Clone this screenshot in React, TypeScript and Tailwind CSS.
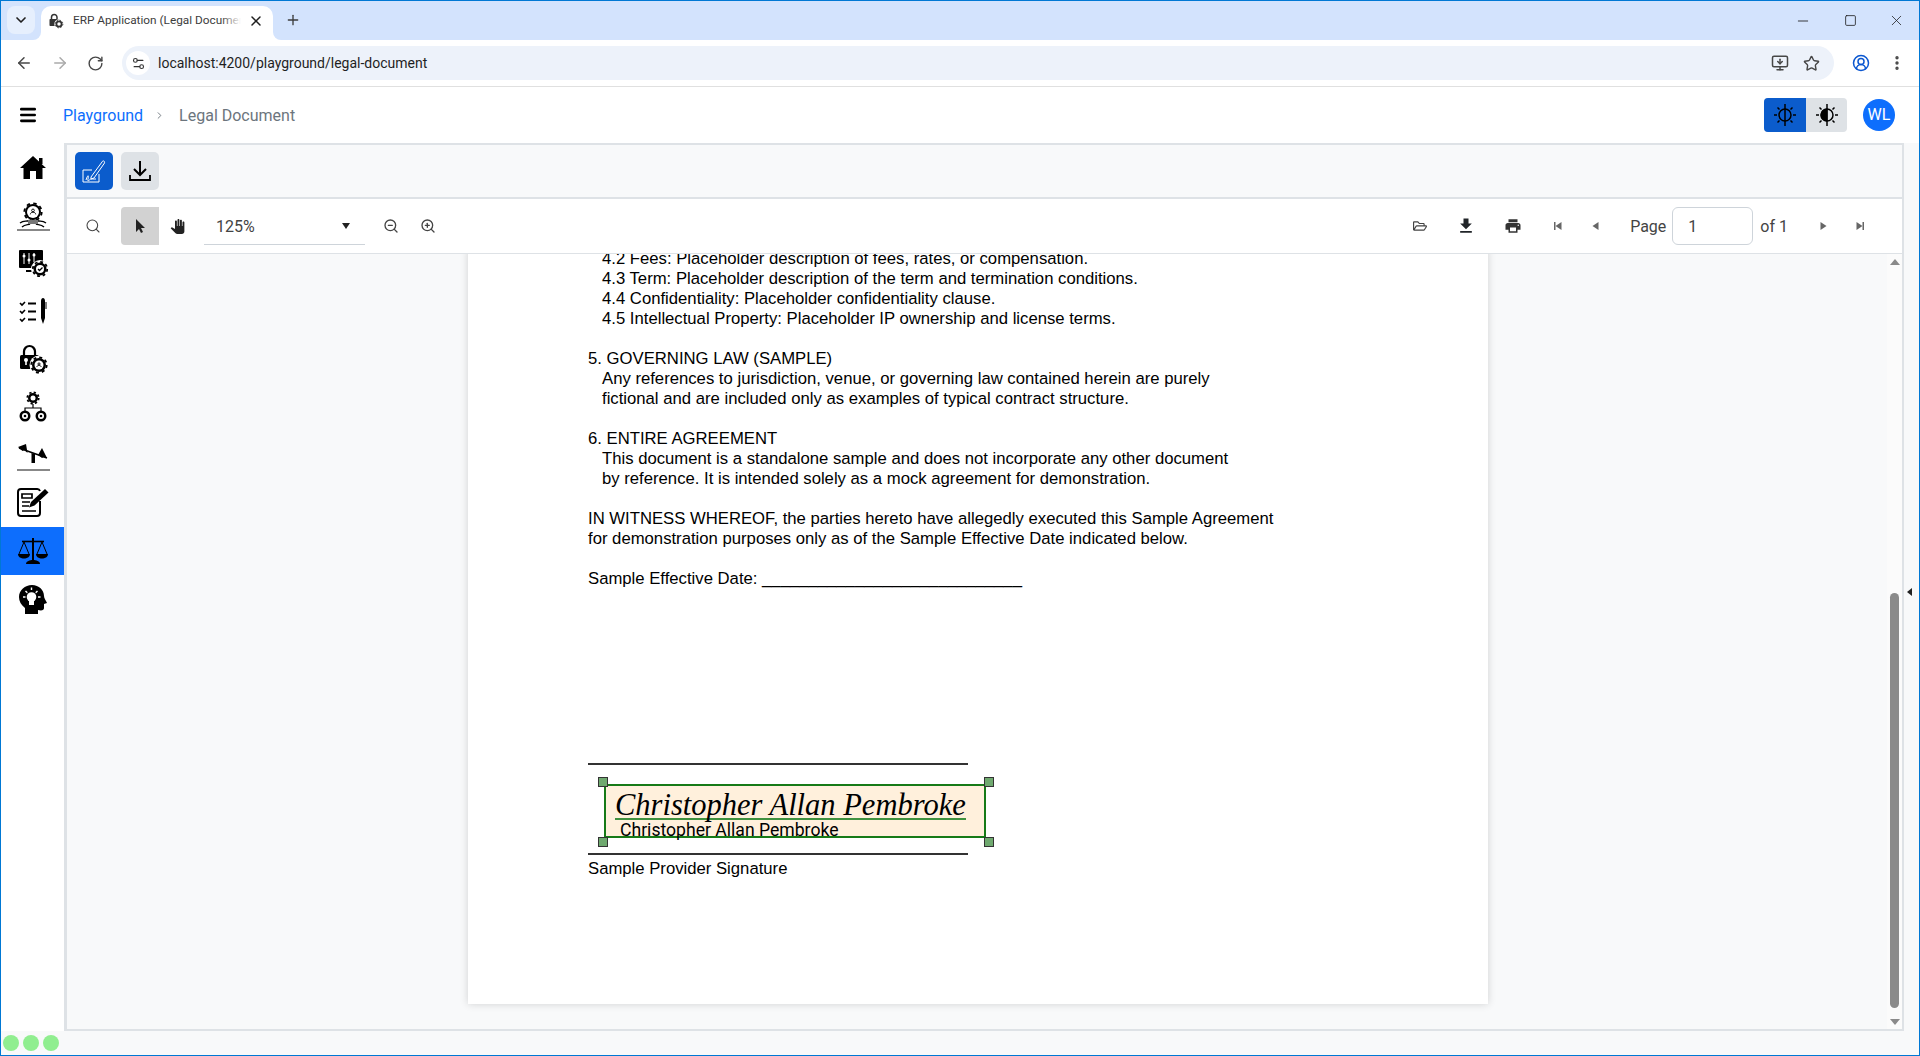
import {
  ArrowLeft,
  ArrowRight,
  ChevronDown,
  ChevronRight,
  CircleUserRound,
  EllipsisVertical,
  Menu,
  Minus,
  MonitorDown,
  Plus,
  RotateCw,
  Search,
  Settings2,
  Square,
  Star,
  X,
  ZoomIn,
  ZoomOut,
} from 'lucide-react'
import { FaRegFolderOpen } from 'react-icons/fa'
import { MdFileDownload, MdLocalPrintshop, MdPanTool } from 'react-icons/md'

function Gear({ cx, cy, r }: { cx: number; cy: number; r: number }) {
  const outer = r + 0.7
  const tooth = (2 * Math.PI * outer) / 16
  return (
    <g>
      <circle cx={cx} cy={cy} r={r} fill="currentColor" />
      <circle cx={cx} cy={cy} r={outer} fill="none" stroke="currentColor" strokeWidth={1.8} strokeDasharray={`${tooth} ${tooth}`} />
    </g>
  )
}

function Person({ cx, cy, s }: { cx: number; cy: number; s: number }) {
  return (
    <g fill="none" stroke="currentColor" strokeWidth={0.9}>
      <circle cx={cx} cy={cy - s * 0.3} r={s * 0.38} />
      <path d={`M${cx - s * 0.75} ${cy + s * 0.8}c0-${s * 0.8} ${s * 1.5}-${s * 0.8} ${s * 1.5} 0`} />
    </g>
  )
}

function Icon({ children }: { children: React.ReactNode }) {
  return (
    <svg viewBox="0 0 32 32" className="w-8 h-8 text-black">
      {children}
    </svg>
  )
}

const HomeIcon = () => (
  <Icon>
    <path fill="currentColor" d="M16 5 29 17h-3.500v11H19v-8h-6v8H6.500V17H3Z" />
    <rect x="22" y="7" width="3.500" height="6" fill="currentColor" />
  </Icon>
)

const EngineerIcon = () => (
  <Icon>
    <Gear cx={16} cy={13} r={8} />
    <circle cx={16} cy={13} r={6} fill="#fff" />
    <Person cx={16} cy={12.500} s={3.600} />
    <path d="M3 24c4-3 6-1 9-2.500M29 24c-4-3-6-1-9-2.500M5 28c3-3 6-2 8-3M27 28c-3-3-6-2-8-3" fill="none" stroke="currentColor" strokeWidth={1.400} />
    <path d="M11 21h10v4H11Z" fill="#777" />
  </Icon>
)

const MonitorIcon = () => (
  <Icon>
    <rect x="2" y="3" width="24" height="18" rx="1" fill="currentColor" />
    <path d="M7 6v11M12 6v11M17 6v9" stroke="#fff" strokeWidth={1} />
    <circle cx="7" cy="9" r="1.500" fill="#fff" />
    <circle cx="12" cy="13" r="1.500" fill="#fff" />
    <circle cx="17" cy="8" r="1.500" fill="#fff" />
    <path d="M9 24h7" stroke="currentColor" strokeWidth={2} />
    <circle cx="23" cy="22" r="9" fill="#fff" />
    <Gear cx={23} cy={22} r={6.500} />
    <circle cx="23" cy="22" r="4" fill="#fff" />
    <path d="m21 22 1.500 1.500L25.500 20.500" fill="none" stroke="currentColor" strokeWidth={1.300} />
  </Icon>
)

const ChecklistIcon = () => (
  <Icon>
    <path d="m3 8 2 2 3-3M3 16l2 2 3-3M3 24l2 2 3-3" fill="none" stroke="currentColor" strokeWidth={1.600} />
    <path d="M11 8.500h8M11 16.500h8M11 24.500h8" stroke="currentColor" strokeWidth={2} />
    <path d="M24 6c0-2 1-3 2-3s2 1 2 3v17l-2 6-2-6Z" fill="currentColor" />
    <path d="M29 7v7" stroke="currentColor" strokeWidth={1} />
  </Icon>
)

const LockGearIcon = () => (
  <Icon>
    <path d="M7 13V8.500a5.500 5.500 0 0 1 11 0V13" fill="none" stroke="currentColor" strokeWidth={2.200} />
    <rect x="3" y="12" width="19" height="14" rx="1.500" fill="currentColor" />
    <circle cx="9" cy="17" r="2" fill="#fff" />
    <path d="M9 18v4" stroke="#fff" strokeWidth={1.600} />
    <circle cx="22" cy="22" r="9.500" fill="#fff" />
    <Gear cx={22} cy={22} r={7} />
    <circle cx="22" cy="22" r="4.500" fill="#fff" />
    <Person cx={22} cy={21.800} s={2.800} />
  </Icon>
)

const OrgIcon = () => (
  <Icon>
    <Gear cx={16} cy={7} r={5} />
    <circle cx="16" cy="7" r="2.500" fill="#fff" />
    <path d="M16 13v4M8 21v-4h16v4" fill="none" stroke="currentColor" strokeWidth={1.200} />
    <circle cx="8" cy="25" r="5.500" fill="currentColor" />
    <circle cx="24" cy="25" r="5.500" fill="currentColor" />
    <circle cx="8" cy="25" r="3" fill="#fff" />
    <circle cx="24" cy="25" r="3" fill="#fff" />
    <circle cx="8" cy="25" r="1.300" fill="currentColor" />
    <circle cx="24" cy="25" r="1.300" fill="currentColor" />
  </Icon>
)

const SeesawIcon = () => (
  <Icon>
    <path d="M2 9 30 19" stroke="currentColor" strokeWidth={1.500} />
    <path d="M1 8 9 5l1.500 9-3-3-2 1ZM21 16l4-7 5 10-3-1-2 1ZM14.500 14l3.500 1v9h-3.500Z" fill="currentColor" />
  </Icon>
)

const DocEditIcon = () => (
  <Icon>
    <path d="M23 14v12a3 3 0 0 1-3 3H4a3 3 0 0 1-3-3V5a3 3 0 0 1 3-3h16a3 3 0 0 1 3 2" fill="none" stroke="currentColor" strokeWidth={2} />
    <path d="M5 7h10v4H5ZM5 15h8M5 19h7M5 24h14" fill="none" stroke="currentColor" strokeWidth={1.700} />
    <path d="m28 2 3.500 3.500-14 13-5.500 2 2-5.500Z" fill="currentColor" />
  </Icon>
)

const ScaleIcon = () => (
  <Icon>
    <path d="M15 3h2v22h-2Z" fill="currentColor" />
    <path d="M5 6.500h22" stroke="currentColor" strokeWidth={1.600} />
    <path d="M7 7 2 19M7 7l5 12M25 7l-5 12M25 7l5 12" fill="none" stroke="currentColor" strokeWidth={1} />
    <path d="M1 19h12c0 6-12 6-12 0ZM19 19h12c0 6-12 6-12 0Z" fill="currentColor" />
    <path d="M9 29c0-3 4-4 7-4s7 1 7 4Z" fill="currentColor" />
  </Icon>
)

const IdeaHeadIcon = () => (
  <Icon>
    <path d="M15 2c7 0 12 5 12 11 0 2 2 5 3 7l-3 1v4c0 2-2 3-6 2v4H8v-6C4 22 2 18 2 14 2 7 8 2 15 2Z" fill="currentColor" />
    <circle cx="14.500" cy="14" r="4.800" fill="#fff" />
    <rect x="12" y="18" width="5" height="4" fill="#fff" />
    <path d="M14.500 4.500v2.500M6 14h2.500M21 14h2.500M8.500 8l1.800 1.800M20.500 8l-1.800 1.800" stroke="#fff" strokeWidth={1.400} />
  </Icon>
)

const TabLogo = () => (
  <svg viewBox="0 0 32 32" className="w-4 h-4 text-[#333]">
    <path d="M7 13V8.500a5.500 5.500 0 0 1 11 0V13" fill="none" stroke="currentColor" strokeWidth={3} />
    <rect x="3" y="12" width="19" height="14" rx="1.500" fill="currentColor" />
    <circle cx="22" cy="22" r="9.500" fill="#fff" />
    <Gear cx={22} cy={22} r={7} />
    <circle cx="22" cy="22" r="3.500" fill="#fff" />
  </svg>
)

const SignIcon = () => (
  <svg viewBox="0 0 32 32" className="w-8 h-8 text-white" fill="none" stroke="currentColor">
    <path d="M14 15H5v12h16v-8" strokeWidth={1} />
    <path d="m13 22 11-15c1-2 3-1 2.500 1L16 23l-3 1Z" strokeWidth={1} />
    <path d="M8 25c2-6 3-5 2-1s2 0 3 0 2 0 5 0" strokeWidth={1} />
  </svg>
)

const SaveIcon = () => (
  <svg viewBox="0 0 24 24" className="w-6 h-6 text-black" fill="none" stroke="currentColor" strokeWidth={2}>
    <path d="M12 2v13M6 10l6 6 6-6" />
    <path d="M2 16v5h20v-5" strokeWidth={1.800} />
  </svg>
)

const CursorIcon = () => (
  <svg viewBox="0 0 16 16" className="w-4 h-4 text-[#222]">
    <path d="M4 1v13l3-3 2 4 2-1-2-4h4Z" fill="currentColor" />
  </svg>
)

const PageTriangle = ({ dir, end }: { dir: 'l' | 'r'; end?: boolean }) => (
  <svg viewBox="0 0 12 12" className="w-3 h-3 text-[#666]">
    {dir === 'l' ? <path d="M9.500 2v8l-6-4Z" fill="currentColor" /> : <path d="M2.500 2v8l6-4Z" fill="currentColor" />}
    {end && (dir === 'l' ? <path d="M2 2h1.500v8H2Z" fill="currentColor" /> : <path d="M8.500 2H10v8H8.500Z" fill="currentColor" />)}
  </svg>
)

const SunHalf = ({ filled }: { filled?: boolean }) => (
  <svg viewBox="0 0 24 24" className="w-[24px] h-[24px] text-black" fill="none" stroke="currentColor">
    <circle cx="12" cy="12" r="6" strokeWidth={1.500} fill="none" />
    {filled && <path d="M12 6a6 6 0 0 0 0 12Z" fill="currentColor" />}
    <path d="M12 1v22" strokeWidth={1.500} />
    <path d="M1 12h3M20 12h3M4.500 4.500l2 2M17.500 17.500l2 2M4.500 19.500l2-2M17.500 6.500l2-2" strokeWidth={1.500} />
  </svg>
)

const lines: { text: string; indent?: boolean }[] = [
  { text: '4.2 Fees: Placeholder description of fees, rates, or compensation.', indent: true },
  { text: '4.3 Term: Placeholder description of the term and termination conditions.', indent: true },
  { text: '4.4 Confidentiality: Placeholder confidentiality clause.', indent: true },
  { text: '4.5 Intellectual Property: Placeholder IP ownership and license terms.', indent: true },
  { text: '' },
  { text: '5. GOVERNING LAW (SAMPLE)' },
  { text: 'Any references to jurisdiction, venue, or governing law contained herein are purely', indent: true },
  { text: 'fictional and are included only as examples of typical contract structure.', indent: true },
  { text: '' },
  { text: '6. ENTIRE AGREEMENT' },
  { text: 'This document is a standalone sample and does not incorporate any other document', indent: true },
  { text: 'by reference. It is intended solely as a mock agreement for demonstration.', indent: true },
  { text: '' },
  { text: 'IN WITNESS WHEREOF, the parties hereto have allegedly executed this Sample Agreement' },
  { text: 'for demonstration purposes only as of the Sample Effective Date indicated below.' },
  { text: '' },
  { text: 'Sample Effective Date: ____________________________' },
]

const navItems = [
  { icon: <HomeIcon /> },
  { icon: <EngineerIcon />, divider: true },
  { icon: <MonitorIcon /> },
  { icon: <ChecklistIcon /> },
  { icon: <LockGearIcon /> },
  { icon: <OrgIcon /> },
  { icon: <SeesawIcon />, divider: true },
  { icon: <DocEditIcon /> },
  { icon: <ScaleIcon />, active: true },
  { icon: <IdeaHeadIcon /> },
]

function TabStrip() {
  return (
    <div className="h-[39px] flex-none flex items-end bg-[#d3e3fd] pl-[6px]">
      <div className="w-[28px] h-[28px] mb-[6px] rounded-lg bg-[#e6effd] flex items-center justify-center">
        <ChevronDown className="w-4 h-4 text-[#1f1f1f]" strokeWidth={2.5} />
      </div>
      <div className="relative ml-[6px] w-[232px] h-[34px] rounded-t-[10px] bg-white flex items-center pl-[7px] pr-[9px] pb-[5px]">
        <div className="absolute -left-[8px] bottom-0 w-2 h-2 bg-white">
          <div className="w-full h-full rounded-br-lg bg-[#d3e3fd]" />
        </div>
        <TabLogo />
        <div className="relative ml-[9px] w-[168px] overflow-hidden whitespace-nowrap text-[11.800px] text-[#3c3c3c]">
          ERP Application (Legal Document)
          <div className="absolute right-0 top-0 bottom-0 w-5 bg-gradient-to-r from-transparent to-white" />
        </div>
        <X className="ml-[7px] w-4 h-4 text-[#1f1f1f]" strokeWidth={2.2} />
        <div className="absolute -right-[8px] bottom-0 w-2 h-2 bg-white">
          <div className="w-full h-full rounded-bl-lg bg-[#d3e3fd]" />
        </div>
      </div>
      <Plus className="ml-[12px] mb-[12px] w-4 h-4 text-[#3c3c3c]" strokeWidth={2} />
      <div className="ml-auto flex items-center mb-[11px] mr-[14px] gap-[31px] text-[#1f1f1f]">
        <Minus className="mr-[2px] w-4 h-4" strokeWidth={1.3} />
        <Square className="w-[13px] h-[13px]" strokeWidth={1.5} />
        <X className="w-[17px] h-[17px]" strokeWidth={1.1} />
      </div>
    </div>
  )
}

function AddressBar() {
  return (
    <div className="h-[47px] flex-none flex items-center rounded-t-lg bg-white border-b border-[#e0e0e0]">
      <div className="flex items-center gap-[18px] pl-[14px] text-[#474747]">
        <ArrowLeft className="w-[18px] h-[18px]" strokeWidth={2} />
        <ArrowRight className="w-[18px] h-[18px] text-[#aaaaaa]" strokeWidth={2} />
        <RotateCw className="w-[17px] h-[17px]" strokeWidth={2} />
      </div>
      <div className="ml-[18px] w-[1712px] h-[34px] rounded-full bg-[#edf2fa] flex items-center pl-[4px] pr-[14px]">
        <div className="w-[24px] h-[24px] rounded-full bg-white flex items-center justify-center">
          <Settings2 className="w-[15px] h-[15px] text-[#333]" strokeWidth={1.8} />
        </div>
        <span className="ml-[8px] pt-[1px] text-[14px] text-[#1f1f1f]">localhost:4200/playground/legal-document</span>
        <MonitorDown className="ml-auto w-[18px] h-[18px] text-[#474747]" strokeWidth={2} />
        <Star className="ml-[14px] w-[17px] h-[17px] text-[#474747]" strokeWidth={2} />
      </div>
      <CircleUserRound className="ml-[18px] w-[18px] h-[18px] text-[#0b57d0]" strokeWidth={2} />
      <EllipsisVertical className="ml-[18px] w-[18px] h-[18px] text-[#474747]" strokeWidth={2.5} />
    </div>
  )
}

function AppHeader() {
  return (
    <div className="h-[56px] flex-none flex items-center pl-[17px] pr-[24px] bg-white">
      <Menu className="w-[20px] h-[20px] text-black" strokeWidth={3.2} />
      <span className="ml-[25px] pt-[1px] text-[16px] text-[#0d6efd]">Playground</span>
      <ChevronRight className="ml-[11px] w-[11px] h-[11px] text-[#6c757d]" strokeWidth={2} />
      <span className="ml-[14px] pt-[1px] text-[16px] text-[#6c757d]">Legal Document</span>
      <div className="ml-auto flex h-[34px] w-[83px] rounded-[4px] overflow-hidden bg-[#dee2e6]">
        <div className="w-[42px] bg-[#0b5ccc] flex items-center justify-center">
          <SunHalf />
        </div>
        <div className="flex-1 flex items-center justify-center">
          <SunHalf filled />
        </div>
      </div>
      <div className="ml-[16px] w-[32px] h-[32px] rounded-full bg-[#0d6efd] flex items-center justify-center text-[16px] text-white">WL</div>
    </div>
  )
}

function Sidebar() {
  return (
    <div className="w-[63px] flex-none flex flex-col bg-white">
      {navItems.map((item, i) => (
        <div key={i} className={`relative h-[48px] flex items-center justify-center ${item.active ? 'bg-[#0d6efd]' : ''}`}>
          {item.icon}
          {item.divider && <div className="absolute left-[16px] right-[14px] bottom-[8px] h-[2px] bg-[#888888]" />}
        </div>
      ))}
    </div>
  )
}

function SignatureField() {
  return (
    <div className="absolute left-[16px] top-[21px] w-[382px] h-[54px] border-2 border-[#177a17] bg-[#fff0dc] text-black">
      <div className="ml-[9px] w-[351px] h-[34px] border-b-2 border-[#3f913f] whitespace-nowrap text-[30.500px] leading-[38px] italic font-['Liberation_Serif',serif]">
        Christopher Allan Pembroke
      </div>
      <div className="ml-[14px] pt-[2px] text-[17.600px] leading-[17px] whitespace-nowrap font-['Roboto',sans-serif]">Christopher Allan Pembroke</div>
      <div className="absolute -left-[8px] -top-[9px] w-[10px] h-[10px] border border-[#333] bg-[#6fa96f]" />
      <div className="absolute -right-[10px] -top-[9px] w-[10px] h-[10px] border border-[#333] bg-[#6fa96f]" />
      <div className="absolute -left-[8px] -bottom-[11px] w-[10px] h-[10px] border border-[#333] bg-[#6fa96f]" />
      <div className="absolute -right-[10px] -bottom-[11px] w-[10px] h-[10px] border border-[#333] bg-[#6fa96f]" />
    </div>
  )
}

function PdfPage() {
  return (
    <div className="w-[1020px] h-[755px] -mt-[5px] ml-[2px] flex-none bg-white pl-[120px] shadow-[0_0_8px_rgba(0,0,0,0.16)] text-[16.700px] leading-[20px] text-black font-['Liberation_Sans',Arial,sans-serif]">
      {lines.map((line, i) => (
        <div key={i} className={`h-[20px] whitespace-pre ${line.indent ? 'pl-[14px]' : ''}`}>
          {line.text}
        </div>
      ))}
      <div className="relative w-[380px] h-[92px] mt-[174px] flex flex-col justify-between">
        <div className="h-[2px] bg-[#333333]" />
        <SignatureField />
        <div className="h-[2px] bg-[#333333]" />
      </div>
      <div className="mt-[4px]">Sample Provider Signature</div>
    </div>
  )
}

function PdfToolbar() {
  return (
    <div className="h-[55px] flex-none flex items-center bg-white border-b border-[#dee2e6] text-[#333]">
      <Search className="ml-[18px] w-[16px] h-[16px] text-[#444]" strokeWidth={1.6} />
      <div className="ml-[20px] w-[38px] h-[38px] rounded-l-[4px] bg-[#d2d2d2] flex items-center justify-center">
        <CursorIcon />
      </div>
      <div className="w-[36px] h-[38px] flex items-center justify-center">
        <MdPanTool className="w-[15px] h-[15px] text-[#222]" />
      </div>
      <div className="ml-[9px] w-[161px] h-[38px] border-b border-[#ced4da] flex items-center pl-[12px] text-[16px] text-[#444]">
        <span className="pt-[2px]">125%</span>
        <div className="ml-auto mr-[15px] w-0 h-0 border-x-[4px] border-x-transparent border-t-[6px] border-t-[#222]" />
      </div>
      <ZoomOut className="ml-[18px] w-[16px] h-[16px] text-[#444]" strokeWidth={2} />
      <ZoomIn className="ml-[21px] w-[16px] h-[16px] text-[#444]" strokeWidth={2} />
      <div className="ml-auto flex items-center pr-[36px]">
        <FaRegFolderOpen className="w-[14px] h-[14px] text-[#444]" />
        <MdFileDownload className="ml-[29px] w-[20px] h-[20px] text-[#212529]" />
        <MdLocalPrintshop className="ml-[28px] w-[18px] h-[18px] text-[#333]" />
        <div className="ml-[30px]">
          <PageTriangle dir="l" end />
        </div>
        <div className="ml-[25px]">
          <PageTriangle dir="l" />
        </div>
        <span className="ml-[29px] pt-[2px] text-[16px] text-[#444]">Page</span>
        <div className="ml-[6px] w-[81px] h-[38px] rounded-[6px] border border-[#ced4da] flex items-center pl-[15px] pt-[2px] text-[16px] text-[#444]">1</div>
        <span className="ml-[7px] pt-[2px] text-[16px] text-[#444]">of 1</span>
        <div className="ml-[30px]">
          <PageTriangle dir="r" />
        </div>
        <div className="ml-[24px]">
          <PageTriangle dir="r" end />
        </div>
      </div>
    </div>
  )
}

function Viewer() {
  return (
    <div className="flex-1 min-h-0 flex bg-[#f8f9fa] overflow-hidden">
      <div className="flex-1 flex justify-center items-start">
        <PdfPage />
      </div>
      <div className="relative w-[15px] flex-none bg-[#fbfbfb]">
        <div className="absolute left-[3px] top-[5px] w-0 h-0 border-x-[5px] border-x-transparent border-b-[6px] border-b-[#8a8a8a]" />
        <div className="absolute left-[3px] bottom-[4px] w-0 h-0 border-x-[5px] border-x-transparent border-t-[6px] border-t-[#8a8a8a]" />
        <div className="absolute left-[3px] bottom-[21px] w-[9px] h-[415px] rounded-full bg-[#8a8a8a]" />
      </div>
    </div>
  )
}

export default function App() {
  return (
    <div className="w-[1920px] h-[1056px] flex flex-col overflow-hidden border border-[#0078d4] bg-white font-['Roboto',sans-serif]">
      <TabStrip />
      <AddressBar />
      <AppHeader />
      <div className="flex-1 min-h-0 flex">
        <Sidebar />
        <div className="flex-1 min-w-0 flex flex-col border-l-[3px] border-t-2 border-r-2 border-b-2 border-[#dee2e6]">
          <div className="h-[54px] flex-none flex items-center gap-[8px] pl-[8px] bg-[#f8f9fa] border-b-2 border-[#dee2e6]">
            <div className="w-[38px] h-[38px] rounded-[5px] bg-[#0b5ccc] flex items-center justify-center">
              <SignIcon />
            </div>
            <div className="w-[38px] h-[38px] rounded-[5px] bg-[#dee2e6] flex items-center justify-center">
              <SaveIcon />
            </div>
          </div>
          <PdfToolbar />
          <Viewer />
        </div>
        <div className="relative w-[15px] flex-none bg-[#f8f9fa]">
          <div className="absolute left-[3px] top-[445px] w-0 h-0 border-y-[4px] border-y-transparent border-r-[5px] border-r-[#222]" />
        </div>
      </div>
      <div className="h-[24px] flex-none flex items-center gap-[4px] pl-[2px] bg-[#f8f9fa]">
        <div className="w-4 h-4 rounded-full bg-[#90ee90]" />
        <div className="w-4 h-4 rounded-full bg-[#90ee90]" />
        <div className="w-4 h-4 rounded-full bg-[#90ee90]" />
      </div>
    </div>
  )
}
